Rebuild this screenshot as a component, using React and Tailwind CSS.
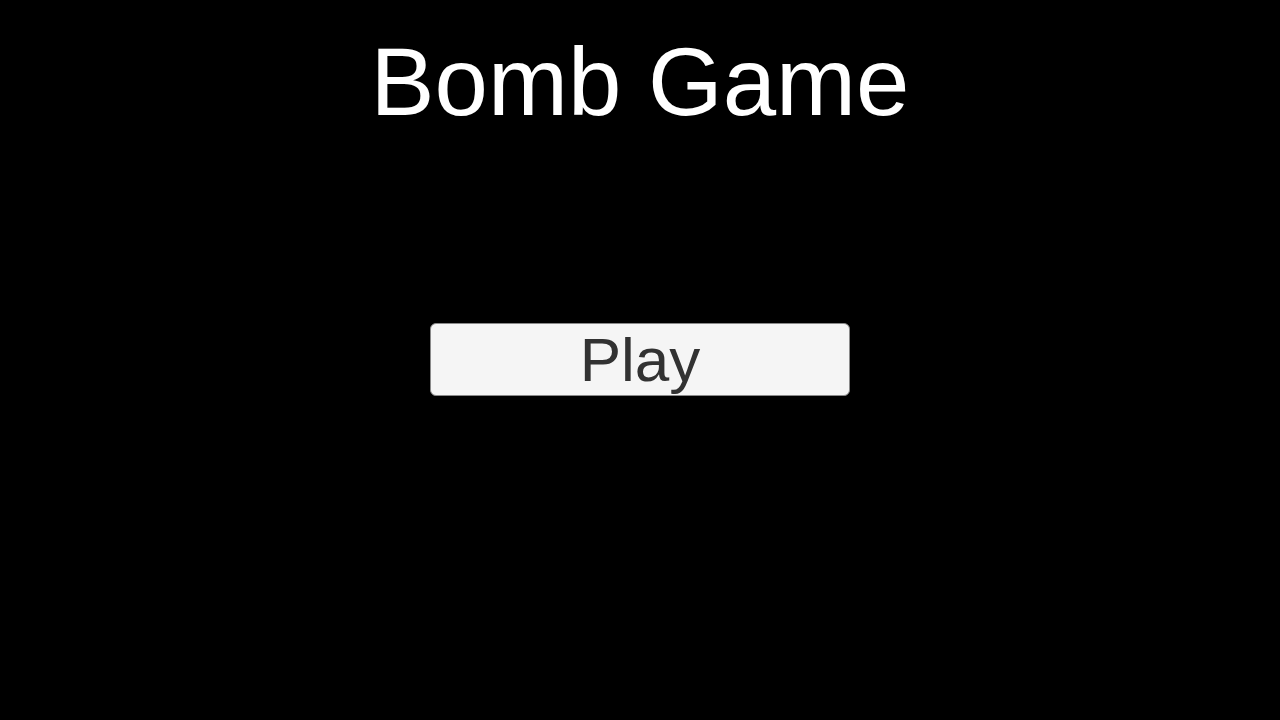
export default function App() {
  return (
    <div
      className="w-full h-screen bg-black flex flex-col items-center"
      style={{ fontFamily: '"Liberation Sans", Arial, sans-serif' }}
    >
      <h1 className="mt-[34px] text-[96px] leading-none text-white font-normal">
        Bomb Game
      </h1>
      <button className="mt-[193px] w-[420px] h-[73px] flex items-center justify-center bg-[#f5f5f5] border border-[#8a8a8a] rounded-[6px] text-[#323232] text-[62px] leading-none">
        Play
      </button>
    </div>
  );
}
